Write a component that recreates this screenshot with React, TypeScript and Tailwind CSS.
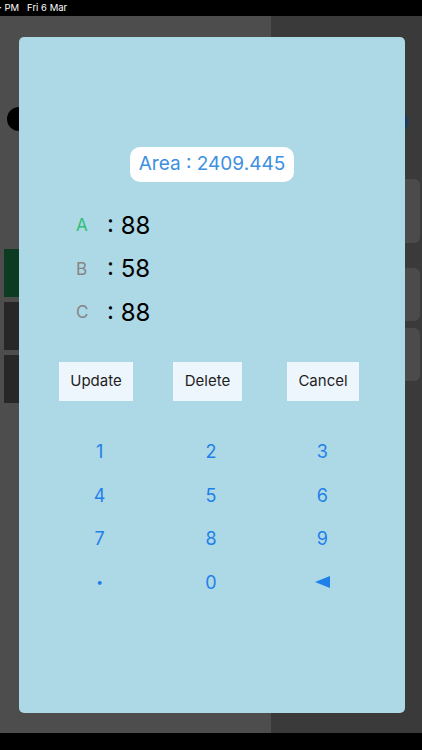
import React from "react";

const font = { fontFamily: "Inter, 'Noto Sans', sans-serif" };

function Row({ label, color, value }: { label: string; color: string; value: string }) {
  return (
    <div className="flex items-center h-[43.5px]">
      <span className={`w-[31px] text-[17px] ${color}`}>{label}</span>
      <span className="text-[24px] text-black">: {value}</span>
    </div>
  );
}

export default function App() {
  const keys = ["1", "2", "3", "4", "5", "6", "7", "8", "9", "•", "0", "◀"];
  return (
    <div className="relative w-[422px] h-[750px] overflow-hidden flex flex-col bg-black" style={font}>
      <div className="h-[16px] bg-black flex items-center text-white text-[9.5px] gap-[8px]">
        <span className="-ml-[1px]">· PM</span>
        <span>Fri 6 Mar</span>
      </div>
      <div className="flex h-[717px]">
        <div className="w-[271px] bg-[#4d4d4d] flex flex-col pt-[91px]">
          <div className="ml-[7px] w-[24px] h-[24px] rounded-full bg-black" />
          <div className="mt-[118px] ml-[4px] flex flex-col gap-[5px]">
            <div className="w-[60px] h-[48px] bg-[#0c3b22]" />
            <div className="w-[60px] h-[48px] bg-[#272727]" />
            <div className="w-[60px] h-[48px] bg-[#272727]" />
          </div>
        </div>
        <div className="flex-1 bg-[#3b3a3a] flex flex-col items-end pr-[2px] pt-[94px]">
          <div className="mr-[12px] w-[24px] h-[24px] rounded-full bg-[#1c3a62]" />
          <div className="mt-[45px] w-[120px] h-[64px] rounded-[6px] bg-[#4b4b4b]" />
          <div className="mt-[25px] w-[120px] h-[53px] rounded-[6px] bg-[#4b4b4b]" />
          <div className="mt-[7px] w-[120px] h-[53px] rounded-[6px] bg-[#4b4b4b]" />
        </div>
      </div>
      <div className="flex-1 bg-black" />

      <div className="absolute left-[19px] top-[37px] w-[386px] h-[676px] rounded-[5px] bg-[#add8e6] flex flex-col">
        <div className="mt-[110px] self-center h-[35px] px-[9px] rounded-[10px] bg-white flex items-center text-[19px] text-[#3d8fe0]">
          Area : 2409.445
        </div>
        <div className="mt-[22px] pl-[57px] flex flex-col">
          <Row label="A" color="text-[#2fbf74]" value="88" />
          <Row label="B" color="text-[#858585]" value="58" />
          <Row label="C" color="text-[#858585]" value="88" />
        </div>
        <div className="mt-[27px] flex h-[39px] text-[15px] text-[#1e1e1e]">
          <div className="ml-[40px] w-[74px] bg-[#eef6fd] flex items-center justify-center">Update</div>
          <div className="ml-[40px] w-[69px] bg-[#eef6fd] flex items-center justify-center">Delete</div>
          <div className="ml-[45px] w-[72px] bg-[#eef6fd] flex items-center justify-center">Cancel</div>
        </div>
        <div className="mt-[29px] ml-[25px] w-[334px] grid grid-cols-3 text-[18px] text-[#1f80ea]">
          {keys.map((k) => (
            <div key={k} className="h-[43.7px] flex items-center justify-center">
              {k === "◀" ? (
                <svg width="15" height="12" viewBox="0 0 15 12">
                  <path d="M0 6 L15 0 L15 12 Z" fill="#1f80ea" />
                </svg>
              ) : k === "•" ? (
                <span className="text-[12px]">•</span>
              ) : (
                k
              )}
            </div>
          ))}
        </div>
      </div>
    </div>
  );
}
